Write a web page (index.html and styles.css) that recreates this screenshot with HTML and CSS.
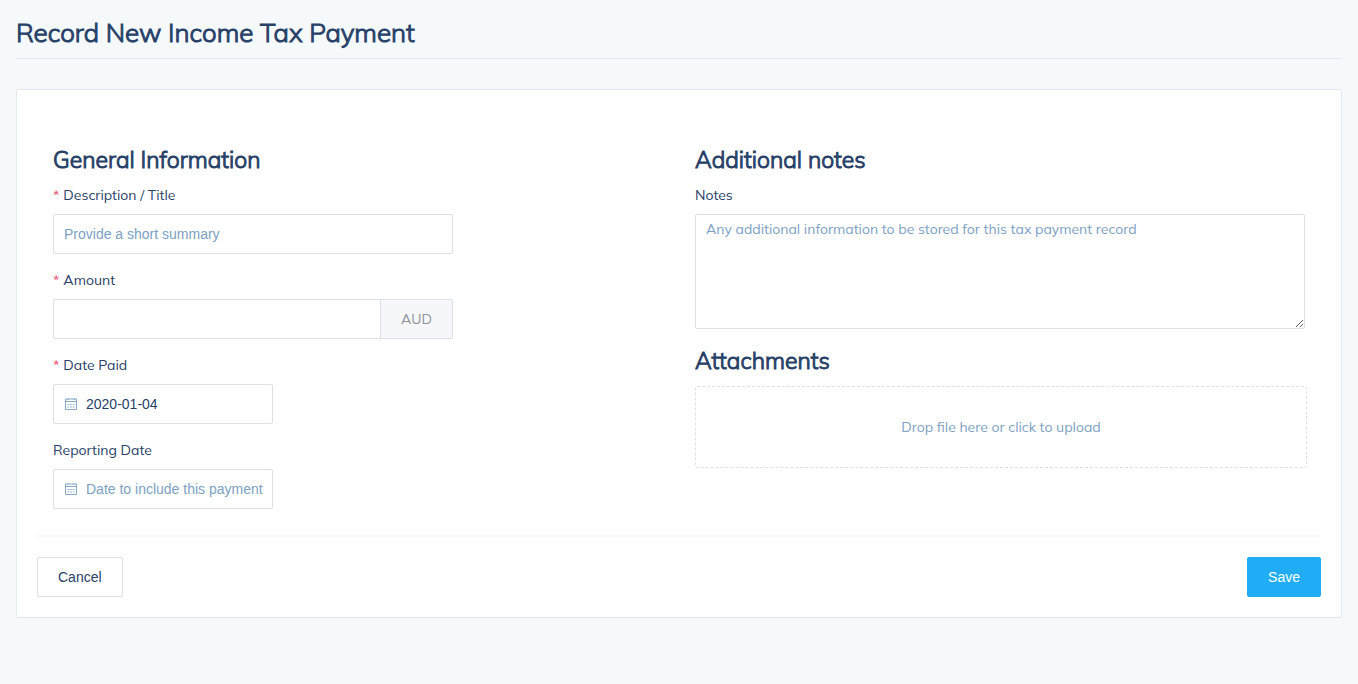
FILE: index.html
```html
<!DOCTYPE html>
<html lang="en">
<head>
<meta charset="utf-8">
<meta name="viewport" content="width=device-width, initial-scale=1">
<title>Record New Income Tax Payment</title>
<link rel="stylesheet" href="styles.css">
</head>
<body>
<svg class="sprite" aria-hidden="true">
  <symbol id="calendar" viewBox="0 0 14 14">
    <path d="M1.5 2h11v10.500h-11zM1.500 4.500h11" fill="none" stroke="currentColor" stroke-width=".9"/>
    <path d="M4 1v2M10 1v2" fill="none" stroke="currentColor" stroke-width=".8"/>
    <path d="M3.5 7.500h7M3.500 10h7" fill="none" stroke="currentColor" stroke-width=".8" stroke-dasharray="1.8 .8"/>
  </symbol>
</svg>
<main class="page">
  <h1 class="page-title">Record New Income Tax Payment</h1>
  <form class="card">
    <div class="columns">
      <section class="column">
        <h2 class="section-title">General Information</h2>
        <div class="field">
          <label class="label required" for="title">Description / Title</label>
          <input class="input" id="title" type="text" placeholder="Provide a short summary">
        </div>
        <div class="field">
          <label class="label required" for="amount">Amount</label>
          <div class="input-group">
            <input class="input" id="amount" type="text">
            <span class="addon">AUD</span>
          </div>
        </div>
        <div class="field">
          <label class="label required" for="paid">Date Paid</label>
          <div class="date">
            <svg class="date-icon" aria-hidden="true"><use href="#calendar"/></svg>
            <input class="input" id="paid" type="text" value="2020-01-04">
          </div>
        </div>
        <div class="field">
          <label class="label" for="reporting">Reporting Date</label>
          <div class="date">
            <svg class="date-icon" aria-hidden="true"><use href="#calendar"/></svg>
            <input class="input" id="reporting" type="text" placeholder="Date to include this payment">
          </div>
        </div>
      </section>
      <section class="column">
        <h2 class="section-title">Additional notes</h2>
        <div class="field">
          <label class="label" for="notes">Notes</label>
          <textarea class="textarea" id="notes" placeholder="Any additional information to be stored for this tax payment record"></textarea>
        </div>
        <h2 class="section-title">Attachments</h2>
        <button class="dropzone" type="button">Drop file here or click to upload</button>
      </section>
    </div>
    <footer class="actions">
      <button class="button" type="button">Cancel</button>
      <button class="button primary" type="submit">Save</button>
    </footer>
  </form>
</main>
</body>
</html>
```
FILE: styles.css
```css
* { box-sizing: border-box; }
body {
  margin: 0;
  background: #f5f9fc;
  color: #284168;
  font: 14px/20px Muli, Mulish, Lato, sans-serif;
}
.sprite { display: none; }
.page { padding: 16px; }
.page-title,
.section-title {
  font-weight: 300;
  font-variant-ligatures: none;
  -webkit-text-stroke: 1px currentColor;
}
.page-title {
  margin: 0 0 30px;
  padding-bottom: 9px;
  border-bottom: 1px solid #e2e8ee;
  font-size: 26px;
  line-height: 33px;
}
.card {
  padding: 20px;
  background: #fff;
  border: 1px solid #e2e8ee;
  border-radius: 2px;
}
.columns {
  display: grid;
  grid-template-columns: 1fr 1fr;
  padding-bottom: 26px;
  border-bottom: 2px solid #f5f9fc;
}
.column { padding: 34px 16px 0; }
.section-title {
  margin: 0 0 10px;
  font-size: 23px;
  line-height: 31px;
}
.field { margin-bottom: 16px; }
.column .field:last-child { margin-bottom: 0; }
.label {
  display: block;
  margin-bottom: 9px;
}
.required::before {
  content: "*";
  margin-right: 4px;
  color: #f2456b;
}
.input {
  display: block;
  width: 100%;
  max-width: 400px;
  height: 40px;
  padding: 0 10px;
  border: 1px solid #dcdfe6;
  border-radius: 2px;
  background: #fff;
  color: #284168;
  font: 14px "Liberation Sans", Arial, sans-serif;
}
::placeholder { color: #7c9fc3; opacity: 1; }
.input-group {
  display: flex;
  max-width: 400px;
}
.input-group .input { border-radius: 2px 0 0 2px; }
.addon {
  padding: 9px 20px;
  border: 1px solid #dcdfe6;
  border-left: 0;
  border-radius: 0 2px 2px 0;
  background: #f5f7fa;
  color: #909399;
}
.date {
  position: relative;
  max-width: 220px;
}
.date .input { padding: 0 9px 0 32px; }
.date-icon {
  position: absolute;
  left: 11px;
  top: 13px;
  width: 14px;
  height: 14px;
  color: #7c9fc3;
}
.textarea {
  display: block;
  width: 100%;
  height: 115px;
  padding: 4px 10px;
  border: 1px solid #dcdfe6;
  border-radius: 2px;
  font: inherit;
  resize: vertical;
}
.dropzone {
  display: block;
  width: calc(100% + 2px);
  height: 82px;
  border: 1px dashed #dcdfe6;
  border-radius: 2px;
  background: #fff;
  color: #7c9fc3;
  font: inherit;
}
.actions {
  display: flex;
  justify-content: space-between;
  padding-top: 20px;
}
.button {
  height: 40px;
  padding: 0 20px;
  border: 1px solid #dcdfe6;
  border-radius: 2px;
  background: #fff;
  color: #284168;
  font: 14px "Liberation Sans", Arial, sans-serif;
}
.primary {
  background: #20adf5;
  border-color: #20adf5;
  color: #fff;
}
```
